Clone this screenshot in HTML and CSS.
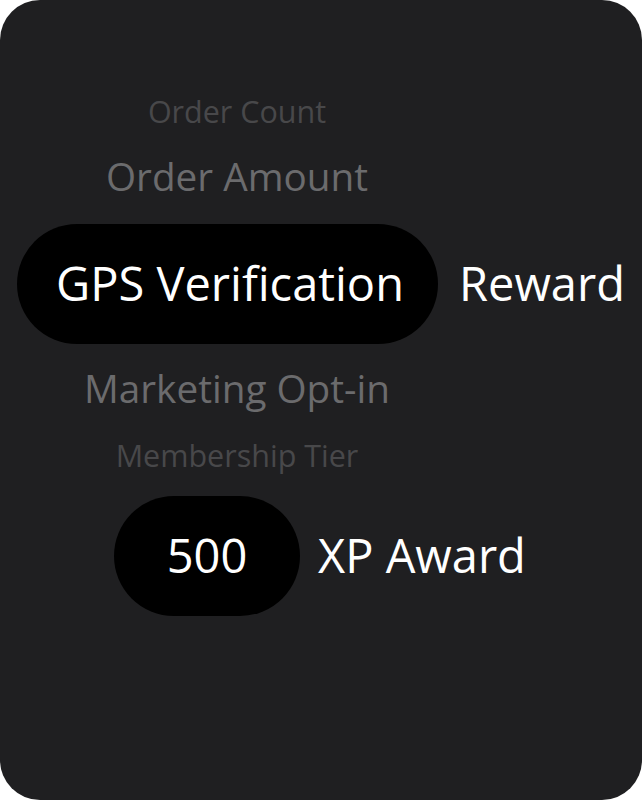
FILE: index.html
```html
<!DOCTYPE html>
<html>
<head>
<meta charset="utf-8">
<link rel="stylesheet" href="styles.css">
</head>
<body>
<div class="card">
  <div class="row r1"><span class="item far">Order Count</span></div>
  <div class="row r2"><span class="item near">Order Amount</span></div>
  <div class="row sel sel1">
    <div class="pill p1"><span class="pill-text">GPS Verification</span></div>
    <span class="label">Reward</span>
  </div>
  <div class="row r4"><span class="item near">Marketing Opt-in</span></div>
  <div class="row r5"><span class="item far">Membership Tier</span></div>
  <div class="row sel sel2">
    <div class="pill p2"><span class="pill-text">500</span></div>
    <span class="label">XP Award</span>
  </div>
</div>
</body>
</html>
```
FILE: styles.css
```css
html, body {
  margin: 0;
  padding: 0;
  background: #ffffff;
}
body {
  font-family: "Open Sans", "DejaVu Sans", sans-serif;
}
.card {
  width: 642px;
  height: 800px;
  border-radius: 40px;
  background: #1f1f21;
  overflow: hidden;
  display: flex;
  flex-direction: column;
  padding-top: 91px;
  box-sizing: border-box;
}
.row {
  display: flex;
  align-items: center;
  height: 40px;
}
.r1, .r2, .r4, .r5 {
  width: 474px;
  justify-content: center;
}
.r2 { margin-top: 25px; }
.sel1 { margin-top: 28px; height: 120px; padding-left: 17px; }
.r4 { margin-top: 24px; }
.r5 { margin-top: 27px; }
.sel2 { margin-top: 21px; height: 120px; padding-left: 114px; }
.item {
  white-space: nowrap;
}
.far {
  font-size: 30.5px;
  color: #48484a;
}
.near {
  font-size: 38.7px;
  color: #6b6b6d;
}
.pill {
  height: 120px;
  border-radius: 60px;
  background: #000000;
  display: flex;
  align-items: center;
  justify-content: center;
  box-sizing: border-box;
  padding-bottom: 3px;
}
.p1 { width: 421px; padding-left: 5px; }
.p2 { width: 186px; }
.pill-text, .label {
  font-size: 47px;
  color: #ffffff;
  white-space: nowrap;
}
.label { padding-bottom: 3px; }
.sel1 .label { margin-left: 21px; }
.sel2 .label { margin-left: 18px; }
```
